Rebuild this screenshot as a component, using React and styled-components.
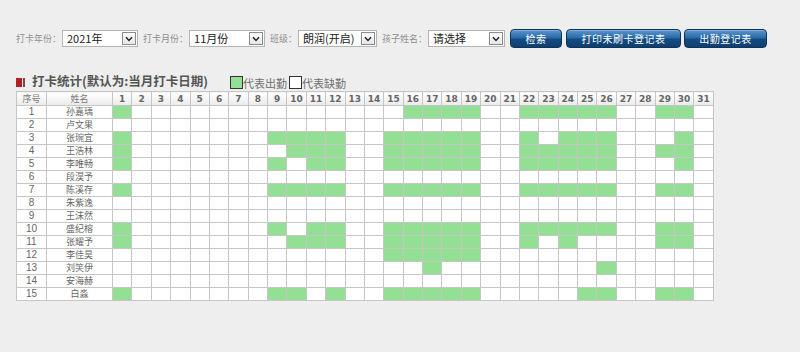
import React from "react";
import styled, { createGlobalStyle } from "styled-components";

const GlobalStyle = createGlobalStyle`
  html, body {
    margin: 0;
    padding: 0;
    background: #eeeeee;
  }
  body {
    font-family: "Noto Sans CJK SC", "DejaVu Sans", sans-serif;
  }
`;

const Page = styled.div`
  padding: 29px 16px 0 16px;
  width: 768px;
`;

const Toolbar = styled.div`
  display: flex;
  align-items: center;
  height: 19px;
`;

const Label = styled.span`
  font-size: 9px;
  line-height: 12px;
  color: #8e8e8e;
  margin-right: 1px;
  white-space: nowrap;
`;

const SelectBox = styled.div`
  box-sizing: border-box;
  width: ${(p) => p.w}px;
  height: 17px;
  margin-right: 5px;
  background: #fff;
  border: 1px solid #b4b4b4;
  display: flex;
  align-items: center;
  justify-content: space-between;
  padding: 0 1px 0 4px;
`;

const SelectValue = styled.span`
  font-size: 11px;
  color: #222;
  line-height: 15px;
`;

const Arrow = styled.span`
  box-sizing: border-box;
  width: 14px;
  height: 13px;
  border: 1px solid #8c8c8c;
  background: linear-gradient(#fdfdfd, #e6e6e6);
  display: flex;
  align-items: center;
  justify-content: center;
`;

const Button = styled.button`
  box-sizing: border-box;
  width: ${(p) => p.w}px;
  height: 19px;
  margin-right: ${(p) => p.mr || 4}px;
  border: 1px solid #0d3458;
  border-radius: 4px;
  background: linear-gradient(#5b97cf 0%, #2b6aa6 45%, #124b82 55%, #0f3f6e 100%);
  color: #fff;
  font-family: "Noto Sans CJK SC", sans-serif;
  font-size: 10px;
  padding: 0;
  line-height: 17px;
  letter-spacing: 0.5px;
  box-shadow: inset 0 1px 0 rgba(255, 255, 255, 0.25);
`;

const TitleRow = styled.div`
  display: flex;
  align-items: flex-end;
  height: 21px;
  margin-top: 22px;
`;

const TitleIcon = styled.span`
  display: flex;
  gap: 1px;
  margin: 0 7px 4px 0;
`;

const IconBar = styled.span`
  display: block;
  width: ${(p) => p.w}px;
  height: 9px;
  background: ${(p) => p.c};
`;

const Title = styled.h2`
  margin: 0;
  font-family: "Noto Sans CJK SC", sans-serif;
  font-size: 12.5px;
  line-height: 20px;
  font-weight: bold;
  color: #555;
  white-space: nowrap;
`;

const Legend = styled.div`
  display: flex;
  align-items: flex-end;
  margin-left: 22px;
  margin-bottom: 2px;
`;

const LegendBox = styled.span`
  box-sizing: border-box;
  display: block;
  width: 13px;
  height: 13px;
  border: 1px solid #333;
  background: ${(p) => (p.on ? "#93df94" : "#fff")};
`;

const LegendText = styled.span`
  font-size: 11px;
  line-height: 12px;
  color: #707070;
  margin-right: 2px;
`;

const Table = styled.table`
  border-collapse: collapse;
  table-layout: fixed;
  width: 698px;
  background: #fff;
  border: 1px solid #c2c2c2;
`;

const HeadCell = styled.th`
  height: 13px;
  padding: 0;
  border: 1px solid #c6c6c6;
  background: linear-gradient(#ffffff, #ebebeb);
  color: ${(p) => (p.num ? "#666" : "#777")};
  font-family: ${(p) =>
    p.num ? '"DejaVu Sans", sans-serif' : '"Noto Sans CJK SC", sans-serif'};
  font-size: 9px;
  font-weight: ${(p) => (p.num ? "bold" : "normal")};
  line-height: 12px;
  text-align: center;
  overflow: hidden;
`;

const Cell = styled.td`
  height: 12px;
  padding: 0;
  border: 1px solid #c6c6c6;
  background: ${(p) => (p.on ? "#93df94" : "#fff")};
  color: #666;
  font-family: ${(p) =>
    p.num ? '"Liberation Sans", sans-serif' : '"Noto Sans CJK SC", sans-serif'};
  font-size: ${(p) => (p.num ? 10 : 9)}px;
  line-height: 12px;
  text-align: center;
  overflow: hidden;
  white-space: nowrap;
`;

const range = (a, b) => Array.from({ length: b - a + 1 }, (_, i) => a + i);

const students = [
  { name: "孙嘉瑀", days: [1, ...range(16, 19), ...range(22, 26), 29, 30] },
  { name: "卢文果", days: [] },
  { name: "张琬宜", days: [1, ...range(9, 12), ...range(15, 19), 22, 24, 25, 26, 30] },
  { name: "王浩林", days: [1, 10, 11, 12, ...range(15, 19), ...range(22, 26), 29, 30] },
  { name: "李唯畅", days: [1, 9, 11, 12, ...range(15, 19), ...range(22, 26), 30] },
  { name: "段淏予", days: [] },
  { name: "陈溪存", days: [1, ...range(9, 12), ...range(15, 19), ...range(22, 26), 29, 30] },
  { name: "朱紫逸", days: [] },
  { name: "王沫然", days: [] },
  { name: "盛纪榕", days: [1, 9, 11, 12, ...range(15, 19), ...range(22, 26), 29, 30] },
  { name: "张耀予", days: [1, 10, 11, 12, ...range(15, 19), 22, 24, 29, 30] },
  { name: "李佳昊", days: range(15, 19) },
  { name: "刘笑伊", days: [17, 26] },
  { name: "安海赫", days: [] },
  { name: "白淼", days: [1, 9, 10, 12, ...range(15, 19), 25, 26, 29, 30] },
];

const days = range(1, 31);

const ArrowIcon = () => (
  <svg width="8" height="6" viewBox="0 0 8 6">
    <path d="M1 1.2 L4 4.4 L7 1.2" fill="none" stroke="#222" strokeWidth="1.5" />
  </svg>
);

const Select = ({ w, value }) => (
  <SelectBox w={w}>
    <SelectValue>{value}</SelectValue>
    <Arrow>
      <ArrowIcon />
    </Arrow>
  </SelectBox>
);

export default function App() {
  return (
    <Page>
      <GlobalStyle />
      <Toolbar>
        <Label>打卡年份：</Label>
        <Select w={76} value="2021年" />
        <Label>打卡月份：</Label>
        <Select w={76} value="11月份" />
        <Label>班级：</Label>
        <Select w={79} value="朗润(开启)" />
        <Label>孩子姓名：</Label>
        <Select w={77} value="请选择" />
        <Button w={52}>检索</Button>
        <Button w={115} mr={3}>打印未刷卡登记表</Button>
        <Button w={83}>出勤登记表</Button>
      </Toolbar>

      <TitleRow>
        <TitleIcon>
          <IconBar w={6} c="#b3211e" />
          <IconBar w={2} c="#7a4a4a" />
        </TitleIcon>
        <Title>打卡统计(默认为:当月打卡日期)</Title>
        <Legend>
          <LegendBox on />
          <LegendText>代表出勤</LegendText>
          <LegendBox />
          <LegendText>代表缺勤</LegendText>
        </Legend>
      </TitleRow>

      <Table>
        <colgroup>
          <col style={{ width: 30 }} />
          <col style={{ width: 66 }} />
          {days.map((d) => (
            <col key={d} />
          ))}
        </colgroup>
        <thead>
          <tr>
            <HeadCell>序号</HeadCell>
            <HeadCell>姓名</HeadCell>
            {days.map((d) => (
              <HeadCell num key={d}>
                {d}
              </HeadCell>
            ))}
          </tr>
        </thead>
        <tbody>
          {students.map((s, i) => (
            <tr key={s.name}>
              <Cell num>{i + 1}</Cell>
              <Cell>{s.name}</Cell>
              {days.map((d) => (
                <Cell key={d} on={s.days.includes(d)} />
              ))}
            </tr>
          ))}
        </tbody>
      </Table>
    </Page>
  );
}
